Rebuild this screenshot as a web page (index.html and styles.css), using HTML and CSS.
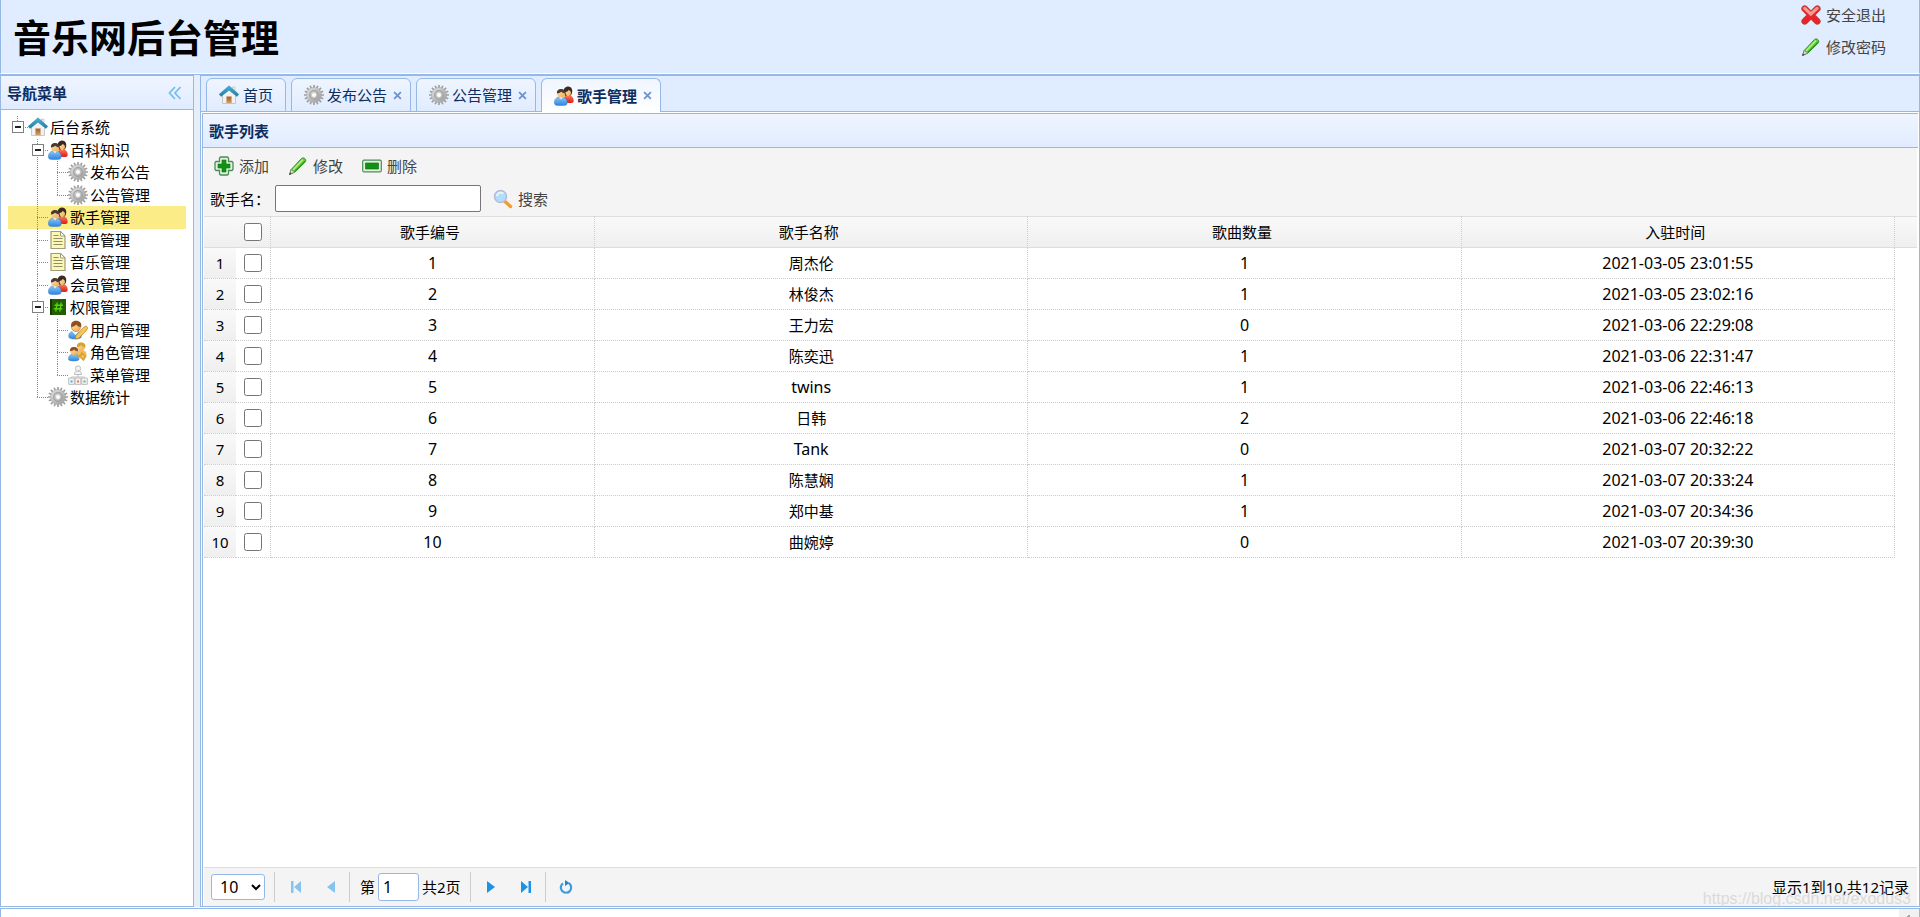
FILE: index.html
```html
<!DOCTYPE html>
<html lang="zh-CN">
<head>
<meta charset="utf-8">
<title>音乐网后台管理</title>
<link rel="stylesheet" href="styles.css">
</head>
<body>
<svg class="defs" aria-hidden="true">
  <defs>
    <linearGradient id="gBlue" x1="0" y1="0" x2="0" y2="1"><stop offset="0" stop-color="#8cc8f8"/><stop offset="1" stop-color="#2f86dc"/></linearGradient>
    <linearGradient id="gRed" x1="0" y1="0" x2="0" y2="1"><stop offset="0" stop-color="#ff7a66"/><stop offset="1" stop-color="#dc1c10"/></linearGradient>
    <linearGradient id="gGrey" x1="0" y1="0" x2="1" y2="1"><stop offset="0" stop-color="#e4e4e4"/><stop offset="1" stop-color="#9a9a9a"/></linearGradient>
    <linearGradient id="gSkin" x1="0" y1="0" x2="1" y2="1"><stop offset="0" stop-color="#ffe2a8"/><stop offset="1" stop-color="#eeaa55"/></linearGradient>
    <linearGradient id="gRoof" x1="0" y1="0" x2="0" y2="1"><stop offset="0" stop-color="#49b3d6"/><stop offset="1" stop-color="#1c7ca3"/></linearGradient>
    <linearGradient id="gDoor" x1="0" y1="0" x2="0" y2="1"><stop offset="0" stop-color="#a85a1c"/><stop offset="1" stop-color="#d99a58"/></linearGradient>
  </defs>
  <symbol id="home" viewBox="0 0 20 20">
    <path d="M13 2h3v5h-3z" fill="#e8e8e8" stroke="#bdbdbd" stroke-width=".6"/>
    <path d="M3.500 9.500 10 4l6.500 5.500V18.500h-13z" fill="#f1f1f1" stroke="#bdbdbd" stroke-width=".8"/>
    <path d="M10 .8 19.800 9.300 18 11.500 10 5.200 2 11.500 .2 9.300z" fill="url(#gRoof)" stroke="#247b9d" stroke-width=".4"/>
    <path d="M7.500 11.500h5V18h-5z" fill="url(#gDoor)" stroke="#c9b49c" stroke-width=".6"/>
  </symbol>
  <symbol id="users" viewBox="0 0 20 20">
    <path d="M9.500 16.500c-.5-4 1-7.500 4.500-7.500 4 0 6 3.300 5.600 6.500-.2 1.200-1.600 1.500-4 1.500z" fill="url(#gRed)"/>
    <path d="M10 9.500C8.500 4 10.500 .5 14 .6c3.500.1 5 3.400 4 6.400-.4 1.500-1.200 2.500-2.500 3z" fill="#3b2a22"/>
    <path d="M11.500 6c1.500 0 2.500-1 3.200-2 1 .6 2.300 1 2.300 2.700 0 2-1.400 3.500-2.800 3.500S11.500 8.500 11.500 6z" fill="url(#gSkin)"/>
    <path d="M.5 17.500c-.4-4 2-6.800 6.300-6.800s6.700 2.800 6.300 6.800c-.2 1.700-2 2-6.300 2s-6.100-.3-6.300-2z" fill="url(#gBlue)" stroke="#2a7fd0" stroke-width=".5"/>
    <circle cx="7.200" cy="8" r="4" fill="url(#gSkin)"/>
    <path d="M3 7.500C2.500 4.500 4.500 3 7 3c2.800 0 4.500 1.800 4.200 4.500C9.500 7.200 8 6.600 7 5.800 6 6.800 4.500 7.500 3 7.500z" fill="#4a3a30"/>
    <path d="M5.500 11.300 7 13.500l1.600-2.200z" fill="#e9f5ff"/>
  </symbol>
  <symbol id="gear" viewBox="0 0 20 20">
    <path d="M10 0v20M0 10h20M2.900 2.900l14.200 14.200M17.100 2.900 2.900 17.100M6.200 .8l7.600 18.400M13.800 .8 6.200 19.200M.8 6.200l18.400 7.600M.8 13.800l18.400-7.600" stroke="#9f9f9f" stroke-width="1.700"/>
    <circle cx="10" cy="10" r="7.600" fill="url(#gGrey)" stroke="#a8a8a8" stroke-width=".6"/>
    <circle cx="10" cy="10" r="4.300" fill="none" stroke="#a3a3a3" stroke-width="1.300"/>
    <circle cx="10" cy="10" r="2.400" fill="#fff" stroke="#c4c4c4" stroke-width=".6"/>
  </symbol>
  <symbol id="doc" viewBox="0 0 20 20">
    <path d="M3 1.500h9.500L17 6v12.500H3z" fill="#fbf7b4" stroke="#a09c78" stroke-width="1.200"/>
    <path d="M12.500 1.500V6H17z" fill="#fff" stroke="#a09c78"/>
    <path d="M5.500 5.500h5M5.500 8.500h9M5.500 11.500h9M5.500 14.500h9" stroke="#8f8c68" stroke-width="1.200"/>
  </symbol>
  <symbol id="hash" viewBox="0 0 20 20">
    <path d="M2 2h16v16H2z" fill="#245c06"/>
    <path d="M2 2h2v16H2z" fill="#133c04"/>
    <path d="M9.200 5.500 7.800 14.500M13.200 5.500l-1.400 9M6.500 8.300h8.500M5.800 11.700h8.500" stroke="#56d40c" stroke-width="1.400"/>
  </symbol>
  <symbol id="useredit" viewBox="0 0 20 20">
    <path d="M.8 17c-.5-4 2-6 6.700-6 4.500 0 6.300 2.500 5.800 6-.3 1.500-3 2-6.300 2-3.500 0-6-.5-6.200-2z" fill="url(#gBlue)" stroke="#3c82c0" stroke-width=".5"/>
    <path d="M4 11h7l-3.500 4z" fill="#fff"/>
    <circle cx="8" cy="7" r="4.500" fill="url(#gSkin)" stroke="#a8662a" stroke-width=".6"/>
    <path d="M3.200 7C2.500 3 4.500 .8 8 .8c3.700 0 6 2.200 5.200 6C11 7.300 9.300 6 8.500 4.500 7 6 5 7 3.200 7z" fill="#91501f"/>
    <path d="M8 15.500 15.500 7.500l2.500-1.500 1.700 1.500-1 2.700-8 8-3.700.8z" fill="#f9c656" stroke="#b57a25" stroke-width=".7"/>
  </symbol>
  <symbol id="userkey" viewBox="0 0 20 20">
    <path d="M8.500 13c-.3-3 1.500-5 4.800-5 3.700 0 5.700 2.300 5.200 5.500-.4 1.700-6 1.800-10-.5z" fill="#f0bd5c"/>
    <circle cx="13" cy="4.700" r="4" fill="url(#gSkin)"/>
    <path d="M9 5C8.500 2 10.500 .4 13 .4c3 0 5 1.900 4.400 5C15.500 5.500 14 4.500 13.300 3 12.300 4.300 10.700 5 9 5z" fill="#d7a12c"/>
    <path d="M.6 17.500c-.4-3.500 1.500-5.500 5.300-5.500s5.500 2 5.100 5.500c-.3 2-10.100 2-10.400 0z" fill="url(#gBlue)" stroke="#3c82c0" stroke-width=".5"/>
    <circle cx="6" cy="9.300" r="3.700" fill="url(#gSkin)"/>
    <path d="M2 9.200C1.500 6.500 3.500 5 6 5c2.800 0 4.500 1.700 4 4.200-1.800.2-3-.4-3.800-1.700-1 1-2.400 1.700-4.200 1.700z" fill="#91501f"/>
    <path d="M9.500 16l5-5M14 11l3.500 3.500-2 3.500-3.500-3.500z" fill="#f6c34e" stroke="#dba031" stroke-width="1.600"/>
  </symbol>
  <symbol id="org" viewBox="0 0 20 20">
    <g fill="#f3f3f3" stroke="#b9b9b9" stroke-width=".9">
      <path d="M10 9v3M3.500 14v-2h13v2" fill="none"/>
      <path d="M6.500 9.500c0-2.500 1-3.500 3.500-3.500s3.500 1 3.500 3.500z"/><circle cx="10" cy="3.500" r="2.700"/>
      <path d="M.7 13h5.600v6.400H.7zM7.200 13h5.600v6.400H7.200zM13.700 13h5.600v6.400h-5.600z"/>
    </g>
    <path d="M2.500 15.500h2v2h-2z" fill="#5aa9e6"/><path d="M9 15.500h2v2H9z" fill="#ee7444"/><path d="M15.500 15.500h2v2h-2z" fill="#63b96b"/>
  </symbol>
  <symbol id="add" viewBox="0 0 20 20">
    <path d="M6.500 1h7l1 1v3.500H18l1 1v7l-1 1h-3.500V18l-1 1h-7l-1-1v-3.500H2l-1-1v-7l1-1h3.500V2z" fill="#dff0dc" stroke="#4c8c58" stroke-width="1.300"/>
    <path d="M8 4h4v4h4v4h-4v4H8v-4H4V8h4z" fill="#129112" stroke="#0a7a12" stroke-width=".6"/>
  </symbol>
  <symbol id="pencil" viewBox="0 0 20 20">
    <path d="M1.500 18.500 3.200 13.500 13.500 2.500c1.800-1.700 5.300.5 4 3.200L7 16z" fill="#5dc83a" stroke="#3d8b35" stroke-width="1"/>
    <path d="M5 14 15 3.500" stroke="#b5f07c" stroke-width="1.800"/>
    <path d="M7 15.500 17 5.300" stroke="#2c9620" stroke-width="1.200"/>
    <path d="M3.200 13.500 7 16l-5.500 2.500z" fill="#d8dcc5" stroke="#71826a" stroke-width=".8"/>
    <path d="M1.200 19 2.200 16.500l1.500 1.200z" fill="#444"/>
  </symbol>
  <symbol id="remove" viewBox="0 0 20 20">
    <rect x=".7" y="4.200" width="18.600" height="11.600" rx="1.200" fill="#e4f1e2" stroke="#4c8c58" stroke-width="1.200"/>
    <path d="M3.500 7h13v6h-13z" fill="#129112" stroke="#0b7a18" stroke-width=".7"/>
  </symbol>
  <symbol id="search" viewBox="0 0 20 20">
    <path d="m12 12.500 5.500 5" stroke="#ef9d35" stroke-width="3.400" stroke-linecap="round"/>
    <path d="m11.500 11.500 1.500 1.500" stroke="#a9a9a9" stroke-width="2"/>
    <circle cx="7.500" cy="7.500" r="6" fill="#b5dcfb" stroke="#b3bfd6" stroke-width="1.600"/>
    <path d="M3.800 7a4 4 0 0 1 6.500-2.500" fill="none" stroke="#e8f6ff" stroke-width="1.800"/>
  </symbol>
  <symbol id="cancel" viewBox="0 0 20 20">
    <path d="M3.700 3.700 16.300 16.300M16.300 3.700 3.700 16.300" stroke="#b8453c" stroke-width="6.600" stroke-linecap="round"/>
    <path d="M3.700 3.700 16.300 16.300M16.300 3.700 3.700 16.300" stroke="#e8242a" stroke-width="5.200" stroke-linecap="round"/>
    <path d="M3.700 3.400 9.800 9l6.300-5.600" fill="none" stroke="#f79a8e" stroke-width="3.200" stroke-linecap="round"/>
  </symbol>
  <symbol id="collapse" viewBox="0 0 14 14"><path d="M7 1 1.500 7 7 13M12.500 1 7 7l5.500 6" fill="none" stroke="#76bdf0" stroke-width="1.800"/></symbol>
  <symbol id="close" viewBox="0 0 8 8"><path d="m1 1 6 6M7 1 1 7" stroke="#6b93cf" stroke-width="1.600"/></symbol>
  <symbol id="first" viewBox="0 0 14 14"><path d="M2 1h2.500v12H2zM12 1v12L5 7z" fill="#86c4f0"/></symbol>
  <symbol id="prev" viewBox="0 0 14 14"><path d="M11 1v12L3 7z" fill="#86c4f0"/></symbol>
  <symbol id="next" viewBox="0 0 14 14"><path d="M3 1v12l8-6z" fill="#1c93e8"/></symbol>
  <symbol id="last" viewBox="0 0 14 14"><path d="M9.500 1H12v12H9.500zM2 1v12l7-6z" fill="#1c93e8"/></symbol>
  <symbol id="reload" viewBox="0 0 14 14"><path d="M9.800 3.200A5.200 5.200 0 1 1 4 3.300" fill="none" stroke="#3a9be0" stroke-width="2.200"/><path d="M6 0v6l4.500-3z" fill="#1c86d8"/></symbol>
</svg>

<header class="north">
  <h1 class="title">音乐网后台管理</h1>
  <div class="account">
    <a class="link-btn" href="#"><svg class="ico"><use href="#cancel"/></svg>安全退出</a>
    <a class="link-btn" href="#"><svg class="ico"><use href="#pencil"/></svg>修改密码</a>
  </div>
</header>

<div class="middle">
  <nav class="west" aria-label="导航菜单">
    <div class="panel-head">
      <h2 class="panel-title">导航菜单</h2>
      <button class="fold" aria-label="收起"><svg class="ico-fold"><use href="#collapse"/></svg></button>
    </div>
    <ul class="tree">
      <li class="node"><i class="cell root"><b class="minus"></b></i><svg class="ico"><use href="#home"/></svg><a class="name" href="#">后台系统</a></li>
      <li class="node"><i class="cell"></i><i class="cell join"><b class="minus"></b></i><svg class="ico"><use href="#users"/></svg><a class="name" href="#">百科知识</a></li>
      <li class="node"><i class="cell"></i><i class="cell line"></i><i class="cell join"></i><svg class="ico"><use href="#gear"/></svg><a class="name" href="#">发布公告</a></li>
      <li class="node"><i class="cell"></i><i class="cell line"></i><i class="cell end"></i><svg class="ico"><use href="#gear"/></svg><a class="name" href="#">公告管理</a></li>
      <li class="node selected"><i class="cell"></i><i class="cell join"></i><svg class="ico"><use href="#users"/></svg><a class="name" href="#">歌手管理</a></li>
      <li class="node"><i class="cell"></i><i class="cell join"></i><svg class="ico"><use href="#doc"/></svg><a class="name" href="#">歌单管理</a></li>
      <li class="node"><i class="cell"></i><i class="cell join"></i><svg class="ico"><use href="#doc"/></svg><a class="name" href="#">音乐管理</a></li>
      <li class="node"><i class="cell"></i><i class="cell join"></i><svg class="ico"><use href="#users"/></svg><a class="name" href="#">会员管理</a></li>
      <li class="node"><i class="cell"></i><i class="cell join"><b class="minus"></b></i><svg class="ico"><use href="#hash"/></svg><a class="name" href="#">权限管理</a></li>
      <li class="node"><i class="cell"></i><i class="cell line"></i><i class="cell join"></i><svg class="ico"><use href="#useredit"/></svg><a class="name" href="#">用户管理</a></li>
      <li class="node"><i class="cell"></i><i class="cell line"></i><i class="cell join"></i><svg class="ico"><use href="#userkey"/></svg><a class="name" href="#">角色管理</a></li>
      <li class="node"><i class="cell"></i><i class="cell line"></i><i class="cell end"></i><svg class="ico"><use href="#org"/></svg><a class="name" href="#">菜单管理</a></li>
      <li class="node"><i class="cell"></i><i class="cell end"></i><svg class="ico"><use href="#gear"/></svg><a class="name" href="#">数据统计</a></li>
    </ul>
  </nav>

  <main class="center">
    <div class="tabs">
      <div class="tab"><svg class="ico"><use href="#home"/></svg><a class="tab-name" href="#">首页</a></div>
      <div class="tab closable"><svg class="ico"><use href="#gear"/></svg><a class="tab-name" href="#">发布公告</a><button class="close" aria-label="关闭"><svg class="ico-close"><use href="#close"/></svg></button></div>
      <div class="tab closable"><svg class="ico"><use href="#gear"/></svg><a class="tab-name" href="#">公告管理</a><button class="close" aria-label="关闭"><svg class="ico-close"><use href="#close"/></svg></button></div>
      <div class="tab closable active"><svg class="ico"><use href="#users"/></svg><a class="tab-name" href="#">歌手管理</a><button class="close" aria-label="关闭"><svg class="ico-close"><use href="#close"/></svg></button></div>
    </div>

    <section class="panel">
      <div class="panel-head"><h2 class="panel-title">歌手列表</h2></div>
      <div class="grid">
        <div class="toolbar">
          <div class="tools">
            <button class="tool"><svg class="ico"><use href="#add"/></svg>添加</button>
            <button class="tool"><svg class="ico"><use href="#pencil"/></svg>修改</button>
            <button class="tool"><svg class="ico"><use href="#remove"/></svg>删除</button>
          </div>
          <div class="query">
            <label class="query-label" for="singer">歌手名：</label>
            <input class="query-input" id="singer" type="text">
            <button class="tool"><svg class="ico"><use href="#search"/></svg>搜索</button>
          </div>
        </div>

        <table class="data">
          <colgroup><col class="c-num"><col class="c-check"><col class="c-id"><col><col><col><col class="c-spare"></colgroup>
          <thead>
            <tr><th class="plain"></th><th class="pick"><input class="check" type="checkbox" aria-label="全选"></th><th>歌手编号</th><th>歌手名称</th><th>歌曲数量</th><th>入驻时间</th><th class="plain"></th></tr>
          </thead>
          <tbody>
            <tr><td class="num">1</td><td><input class="check" type="checkbox" aria-label="选择1"></td><td>1</td><td class="singer">周杰伦</td><td>1</td><td>2021-03-05 23:01:55</td></tr>
            <tr><td class="num">2</td><td><input class="check" type="checkbox" aria-label="选择2"></td><td>2</td><td class="singer">林俊杰</td><td>1</td><td>2021-03-05 23:02:16</td></tr>
            <tr><td class="num">3</td><td><input class="check" type="checkbox" aria-label="选择3"></td><td>3</td><td class="singer">王力宏</td><td>0</td><td>2021-03-06 22:29:08</td></tr>
            <tr><td class="num">4</td><td><input class="check" type="checkbox" aria-label="选择4"></td><td>4</td><td class="singer">陈奕迅</td><td>1</td><td>2021-03-06 22:31:47</td></tr>
            <tr><td class="num">5</td><td><input class="check" type="checkbox" aria-label="选择5"></td><td>5</td><td>twins</td><td>1</td><td>2021-03-06 22:46:13</td></tr>
            <tr><td class="num">6</td><td><input class="check" type="checkbox" aria-label="选择6"></td><td>6</td><td class="singer">日韩</td><td>2</td><td>2021-03-06 22:46:18</td></tr>
            <tr><td class="num">7</td><td><input class="check" type="checkbox" aria-label="选择7"></td><td>7</td><td>Tank</td><td>0</td><td>2021-03-07 20:32:22</td></tr>
            <tr><td class="num">8</td><td><input class="check" type="checkbox" aria-label="选择8"></td><td>8</td><td class="singer">陈慧娴</td><td>1</td><td>2021-03-07 20:33:24</td></tr>
            <tr><td class="num">9</td><td><input class="check" type="checkbox" aria-label="选择9"></td><td>9</td><td class="singer">郑中基</td><td>1</td><td>2021-03-07 20:34:36</td></tr>
            <tr><td class="num">10</td><td><input class="check" type="checkbox" aria-label="选择10"></td><td>10</td><td class="singer">曲婉婷</td><td>0</td><td>2021-03-07 20:39:30</td></tr>
          </tbody>
        </table>

        <div class="pager">
          <select class="size" aria-label="每页条数"><option>10</option><option>20</option><option>50</option></select>
          <span class="sep"></span>
          <button class="nav-btn" aria-label="第一页" disabled><svg class="ico-nav"><use href="#first"/></svg></button>
          <button class="nav-btn" aria-label="上一页" disabled><svg class="ico-nav"><use href="#prev"/></svg></button>
          <span class="sep"></span>
          <label class="page"><span>第</span><input class="page-input" type="text" value="1"><span>共2页</span></label>
          <span class="sep"></span>
          <button class="nav-btn" aria-label="下一页"><svg class="ico-nav"><use href="#next"/></svg></button>
          <button class="nav-btn" aria-label="最后一页"><svg class="ico-nav"><use href="#last"/></svg></button>
          <span class="sep"></span>
          <button class="nav-btn" aria-label="刷新"><svg class="ico-nav"><use href="#reload"/></svg></button>
          <span class="summary">显示1到10,共12记录</span>
          <span class="watermark">https://blog.csdn.net/exodus3</span>
        </div>
      </div>
    </section>
  </main>
</div>

<footer class="south"><span class="scroll-up"></span></footer>
</body>
</html>
```

FILE: styles.css
```css
* { box-sizing: border-box; }

body {
  display: flex;
  flex-direction: column;
  height: 100vh;
  margin: 0;
  overflow: hidden;
  background: #fff;
  color: #000;
  font: 15px/20px "Noto Sans", "Noto Sans CJK SC", sans-serif;
}

button, input, select { font: inherit; color: inherit; }
button { padding: 0; border: 0; background: none; cursor: pointer; }
a { color: inherit; text-decoration: none; }
h1, h2, ul { margin: 0; padding: 0; }

.defs { position: absolute; width: 0; height: 0; }
.ico { flex: none; width: 20px; height: 20px; }

/* header */
.north {
  display: flex;
  flex: none;
  justify-content: space-between;
  padding: 3px 33px 0 12px;
  height: 74px;
  border: 1px solid #95b8e7;
  border-width: 0 1px;
  border-bottom: 1px solid #fff;
  background: #e0ecff;
}
.title { font-size: 38px; line-height: 68px; }
.account { display: flex; flex-direction: column; gap: 8px; color: #444; }
.link-btn { display: flex; align-items: center; gap: 5px; height: 24px; }

/* frame */
.middle {
  display: flex;
  flex: 1;
  gap: 6px;
  min-height: 0;
  margin-bottom: 1px;
  border-top: 1px solid #95b8e7;
  background: #e6eef8;
}
.west {
  flex: none;
  width: 194px;
  border: 1px solid #95b8e7;
  background: #fff;
}
.panel-head {
  display: flex;
  align-items: center;
  justify-content: space-between;
  height: 34px;
  padding: 0 11px 0 6px;
  border-bottom: 1px solid #95b8e7;
  background: linear-gradient(#eff5ff, #e0ecff);
  color: #0e2d5f;
}
.panel-title { font-size: 15px; line-height: 20px; }
.fold { display: flex; }
.ico-fold { width: 14px; height: 14px; }

/* tree */
.tree { padding: 6px 7px; list-style: none; line-height: 1.5; }
.node { display: flex; align-items: center; }
.selected { background: #fbec88; }
.name { padding-left: 2px; }
.cell { position: relative; align-self: stretch; flex: none; width: 20px; }
.line::before, .join::before, .end::before, .root::before {
  content: "";
  position: absolute;
  left: 9px;
  top: 0;
  bottom: 0;
  width: 1px;
  background: repeating-linear-gradient(#888 0 1px, transparent 1px 2px);
}
.end::before, .root::before { bottom: 50%; }
.join::after, .end::after, .root::after {
  content: "";
  position: absolute;
  left: 9px;
  right: 0;
  top: 11px;
  height: 1px;
  background: repeating-linear-gradient(90deg, #888 0 1px, transparent 1px 2px);
}
.minus {
  position: absolute;
  z-index: 1;
  left: 4px;
  top: 5px;
  width: 12px;
  height: 12px;
  border: 1px solid #808080;
  background: linear-gradient(#222, #222) center / 6px 2px no-repeat #fff;
}

/* tabs */
.center {
  display: flex;
  flex: 1;
  flex-direction: column;
  min-width: 0;
  border: 1px solid #95b8e7;
  background: #fff;
}
.tabs {
  display: flex;
  flex: none;
  gap: 5px;
  padding: 2px 5px 0;
  height: 36px;
  background: linear-gradient(#95b8e7, #95b8e7) bottom / 100% 1px no-repeat #e0ecff;
}
.tab {
  display: flex;
  align-items: center;
  gap: 4px;
  padding: 0 12px;
  border: 1px solid #95b8e7;
  border-radius: 6px 6px 0 0;
  background: linear-gradient(#eff5ff, #e0ecff);
  color: #0e2d5f;
}
.closable { gap: 3px; padding-right: 8px; }
.active { border-bottom: 0; background: linear-gradient(#eff5ff, #fff); font-weight: bold; }
.close { display: flex; margin-left: 3px; }
.ico-close { width: 9px; height: 9px; }

/* grid panel */
.panel {
  display: flex;
  flex: 1;
  flex-direction: column;
  min-height: 0;
  margin: 1px 1px 0;
  border: 1px solid #95b8e7;
  border-width: 1px 0 0 1px;
}
.grid { display: flex; flex: 1; flex-direction: column; padding: 0 1px; }
.toolbar { padding: 2px 0 1px; background: #f4f4f4; }
.tools { display: flex; height: 32px; }
.query { display: flex; align-items: center; height: 33px; padding-left: 6px; }
.tool { display: flex; align-items: center; gap: 5px; padding: 0 9px 0 10px; color: #444; }
.query-label { width: 65px; white-space: nowrap; }
.query-input { width: 206px; height: 27px; margin-right: 2px; border: 1px solid #767676; border-radius: 2px; background: #fff; }

.data { width: 100%; table-layout: fixed; border-collapse: separate; border-spacing: 0; text-align: center; }
.c-num { width: 32px; }
.c-check { width: 35px; }
.c-id { width: 324px; }
.c-spare { width: 22px; }
.data th, .data td {
  height: 31px;
  padding: 0;
  border: 0 dotted #ccc;
  border-width: 0 1px 1px 0;
}
.data td { font-size: 16px; }
.data .singer { font-size: 15px; }
.data th {
  height: 32px;
  padding-right: 5px;
  border-top: 1px solid #ddd;
  border-bottom: 1px solid #ddd;
  background: linear-gradient(#f9f9f9, #efefef);
  font-weight: normal;
}
.data .pick { padding-right: 0; }
.data .plain, .data .num { border-right: 0; }
.data .num { background: linear-gradient(#f9f9f9, #efefef); font-size: 15px; }
.check { display: block; width: 18px; height: 18px; margin: 0 auto; }

/* pager */
.pager {
  position: relative;
  display: flex;
  align-items: center;
  height: 39px;
  margin-top: auto;
  padding: 0 8px 0 7px;
  border-top: 1px solid #ddd;
  background: #f4f4f4;
}
.size { width: 54px; height: 26px; padding: 0 4px; border: 1px solid #95b8e7; border-radius: 3px; background: #fff; font-size: 16px; }
.sep { width: 1px; height: 30px; margin: 0 3px 0 9px; background: #ccc; }
.nav-btn { display: flex; justify-content: center; width: 35px; }
.ico-nav { width: 14px; height: 14px; }
.nav-btn + .sep { margin-left: 1px; }
.page { display: flex; align-items: center; gap: 3px; padding-left: 7px; }
.page-input { width: 41px; height: 28px; padding: 0 4px; border: 1px solid #95b8e7; border-radius: 3px; background: #fff; font-size: 16px; }
.summary { margin-left: auto; }
.watermark {
  position: absolute;
  right: 6px;
  bottom: -3px;
  color: rgba(200, 200, 200, .6);
  font: 16px/20px "Liberation Sans", sans-serif;
}

/* bottom region */
.south {
  display: flex;
  flex: none;
  justify-content: flex-end;
  height: 9px;
  border: 1px solid #95b8e7;
  border-bottom: 0;
  background: #fff;
}
.scroll-up {
  width: 20px;
  background: conic-gradient(from 135deg at 50% 0, #a3a3a3 90deg, transparent 0) center 6px / 6px 3px no-repeat #f1f1f1;
}
```
